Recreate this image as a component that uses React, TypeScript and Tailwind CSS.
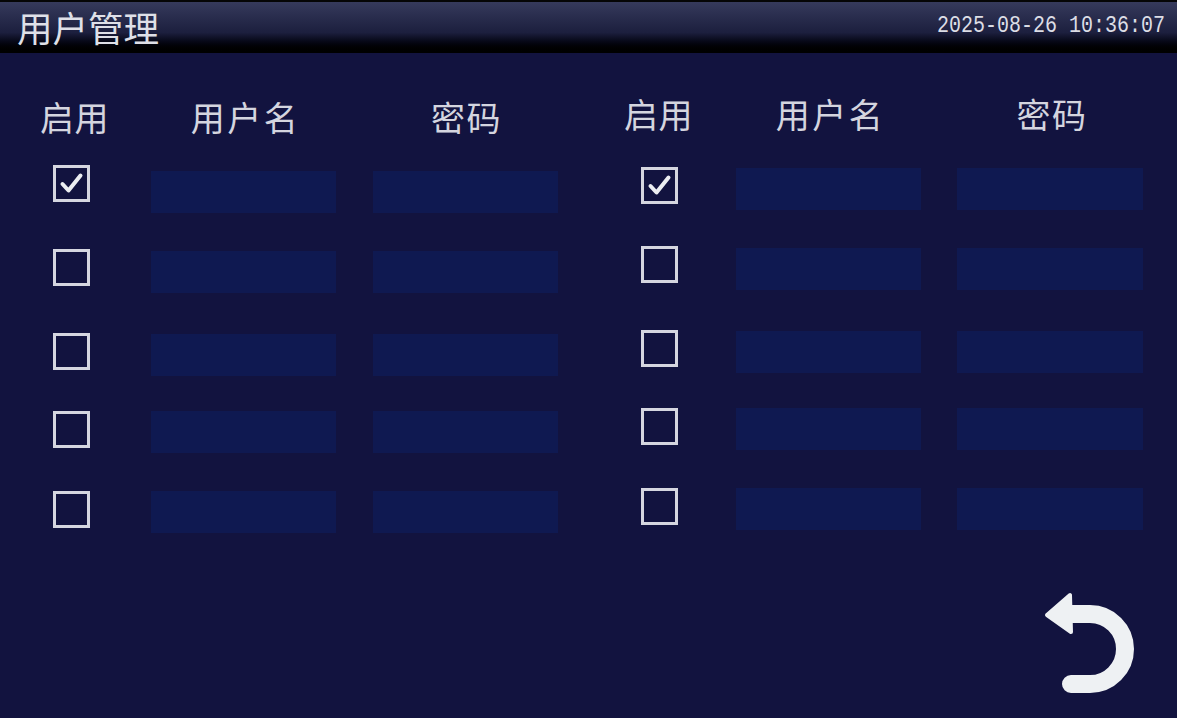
const cjk = "font-['Noto_Sans_CJK_SC','Noto_Sans',sans-serif]";

const leftRows = [
  { row: "mt-[27px]", input: "mt-[6px]", checked: true },
  { row: "mt-[36px]", input: "mt-[2px]", checked: false },
  { row: "mt-[40px]", input: "mt-[1px]", checked: false },
  { row: "mt-[35px]", input: "mt-0", checked: false },
  { row: "mt-[38px]", input: "mt-0", checked: false },
];

const rightRows = [
  { row: "mt-[32px]", input: "mt-[1px]", checked: true },
  { row: "mt-[36px]", input: "mt-[2px]", checked: false },
  { row: "mt-[40px]", input: "mt-[1px]", checked: false },
  { row: "mt-[35px]", input: "mt-0", checked: false },
  { row: "mt-[38px]", input: "mt-0", checked: false },
];

function Checkbox({ checked }: { checked: boolean }) {
  return (
    <div className="w-[37px] h-[37px] shrink-0 border-[3px] border-[#d5d6e0] bg-[#12133f] flex items-center justify-center">
      {checked && (
        <svg width="25" height="23" viewBox="0 0 25 23" fill="none">
          <path d="M3.5 12 L9.5 18.5 L21.5 3.5" stroke="#eceef2" strokeWidth="4" strokeLinecap="round" strokeLinejoin="round" />
        </svg>
      )}
    </div>
  );
}

function Panel({
  rows,
  top,
  gapClass,
  gap2,
  w2,
  panelClass,
  labelClass,
  pwClass,
}: {
  rows: typeof leftRows;
  top: string;
  gapClass: string;
  gap2: string;
  w2: string;
  panelClass: string;
  labelClass: string;
  pwClass: string;
}) {
  return (
    <div className={`flex flex-col ${panelClass}`}>
      <div className={`flex h-10 text-[34px] leading-[38px] text-[#d4d5df] ${cjk} ${top}`}>
        <div className="w-[37px] flex justify-center whitespace-nowrap">
          <span className={`shrink-0 relative tracking-[0.5px] ${labelClass}`}>启用</span>
        </div>
        <div className={`${gapClass} shrink-0`} />
        <div className="w-[185px] pl-[4px] text-center tracking-[2.5px] shrink-0">用户名</div>
        <div className={`${gap2} shrink-0`} />
        <div className={`${w2} ${pwClass} text-center tracking-[1.5px] shrink-0`}>密码</div>
      </div>
      {rows.map((r, i) => (
        <div key={i} className={`flex items-start ${r.row}`}>
          <Checkbox checked={r.checked} />
          <div className={`${gapClass} shrink-0`} />
          <div className={`w-[185px] h-[42px] shrink-0 bg-[#0f1951] ${r.input}`} />
          <div className={`${gap2} shrink-0`} />
          <div className={`${w2} h-[42px] shrink-0 bg-[#0f1951] ${r.input}`} />
        </div>
      ))}
    </div>
  );
}

export default function App() {
  return (
    <div className="w-[1177px] h-[718px] overflow-hidden flex flex-col bg-[#12133f]">
      <header className="h-[53px] shrink-0 flex items-center justify-between pl-[17px] pr-[12px] border-t-2 border-[#050506] bg-gradient-to-b from-[#363a5c] via-[#1c1f3e] via-60% to-[#000000]">
        <span className={`text-[35.5px] leading-[46px] -mt-[2px] text-[#dfe0e8] ${cjk}`}>用户管理</span>
        <span className="text-[20px] leading-6 -mt-[3px] scale-y-[1.2] text-[#dcdde5] font-['Liberation_Mono',monospace] whitespace-nowrap">
          2025-08-26 10:36:07
        </span>
      </header>
      <main className="flex-1 flex flex-col">
        <div className="flex pl-[53px]">
          <Panel rows={leftRows} top="mt-[45px]" gapClass="w-[61px]" gap2="w-[37px]" w2="w-[185px]" panelClass="w-[588px]" labelClass="left-[3px]" pwClass="pl-[2px]" />
          <Panel rows={rightRows} top="mt-[42px]" gapClass="w-[58px]" gap2="w-[36px]" w2="w-[186px]" panelClass="w-[488px]" labelClass="-left-[1px]" pwClass="pl-[4px]" />
        </div>
        <div className="mt-auto flex justify-end pr-[37px] pb-[20px]">
          <svg width="100" height="108" viewBox="0 0 100 108" fill="none">
            <path d="M33 24 H50 A35 35 0 0 1 50 94 H31" stroke="#eef1f3" strokeWidth="18" strokeLinecap="round" />
            <path d="M7 25 L30 5 L31 42 Z" fill="#eef1f3" stroke="#eef1f3" strokeWidth="4" strokeLinejoin="round" />
            <rect x="29" y="15" width="6" height="18" fill="#eef1f3" />
          </svg>
        </div>
      </main>
    </div>
  );
}
